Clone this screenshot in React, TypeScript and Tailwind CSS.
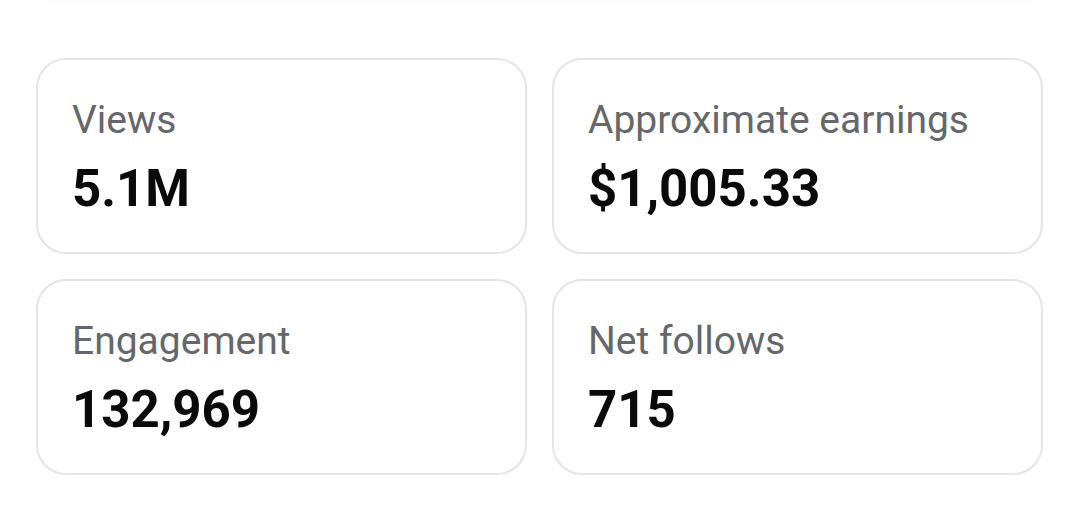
const STATS = [
  { label: "Views", value: "5.1M" },
  { label: "Approximate earnings", value: "$1,005.33" },
  { label: "Engagement", value: "132,969" },
  { label: "Net follows", value: "715" },
];

function StatCard({ label, value }: { label: string; value: string }) {
  return (
    <div className="h-[196px] rounded-[30px] border-[2.5px] border-[#e3e5e8] bg-white pl-[34px] pt-[37px]">
      <p className="text-[39px] leading-[47px] text-[#65676b]">{label}</p>
      <p className="mt-[15px] text-[51px] font-bold leading-[60px] text-[#0a0a0a]">{value}</p>
    </div>
  );
}

export default function App() {
  return (
    <main className="h-[514px] w-[1080px] bg-white font-['Roboto','Liberation_Sans',sans-serif]">
      <div className="mx-[48px] h-[4px] bg-[#fbfbfb]" />
      <div className="grid grid-cols-2 gap-x-[25px] gap-y-[25px] pl-[36px] pr-[37px] pt-[54px]">
        {STATS.map((s) => (
          <StatCard key={s.label} label={s.label} value={s.value} />
        ))}
      </div>
    </main>
  );
}
